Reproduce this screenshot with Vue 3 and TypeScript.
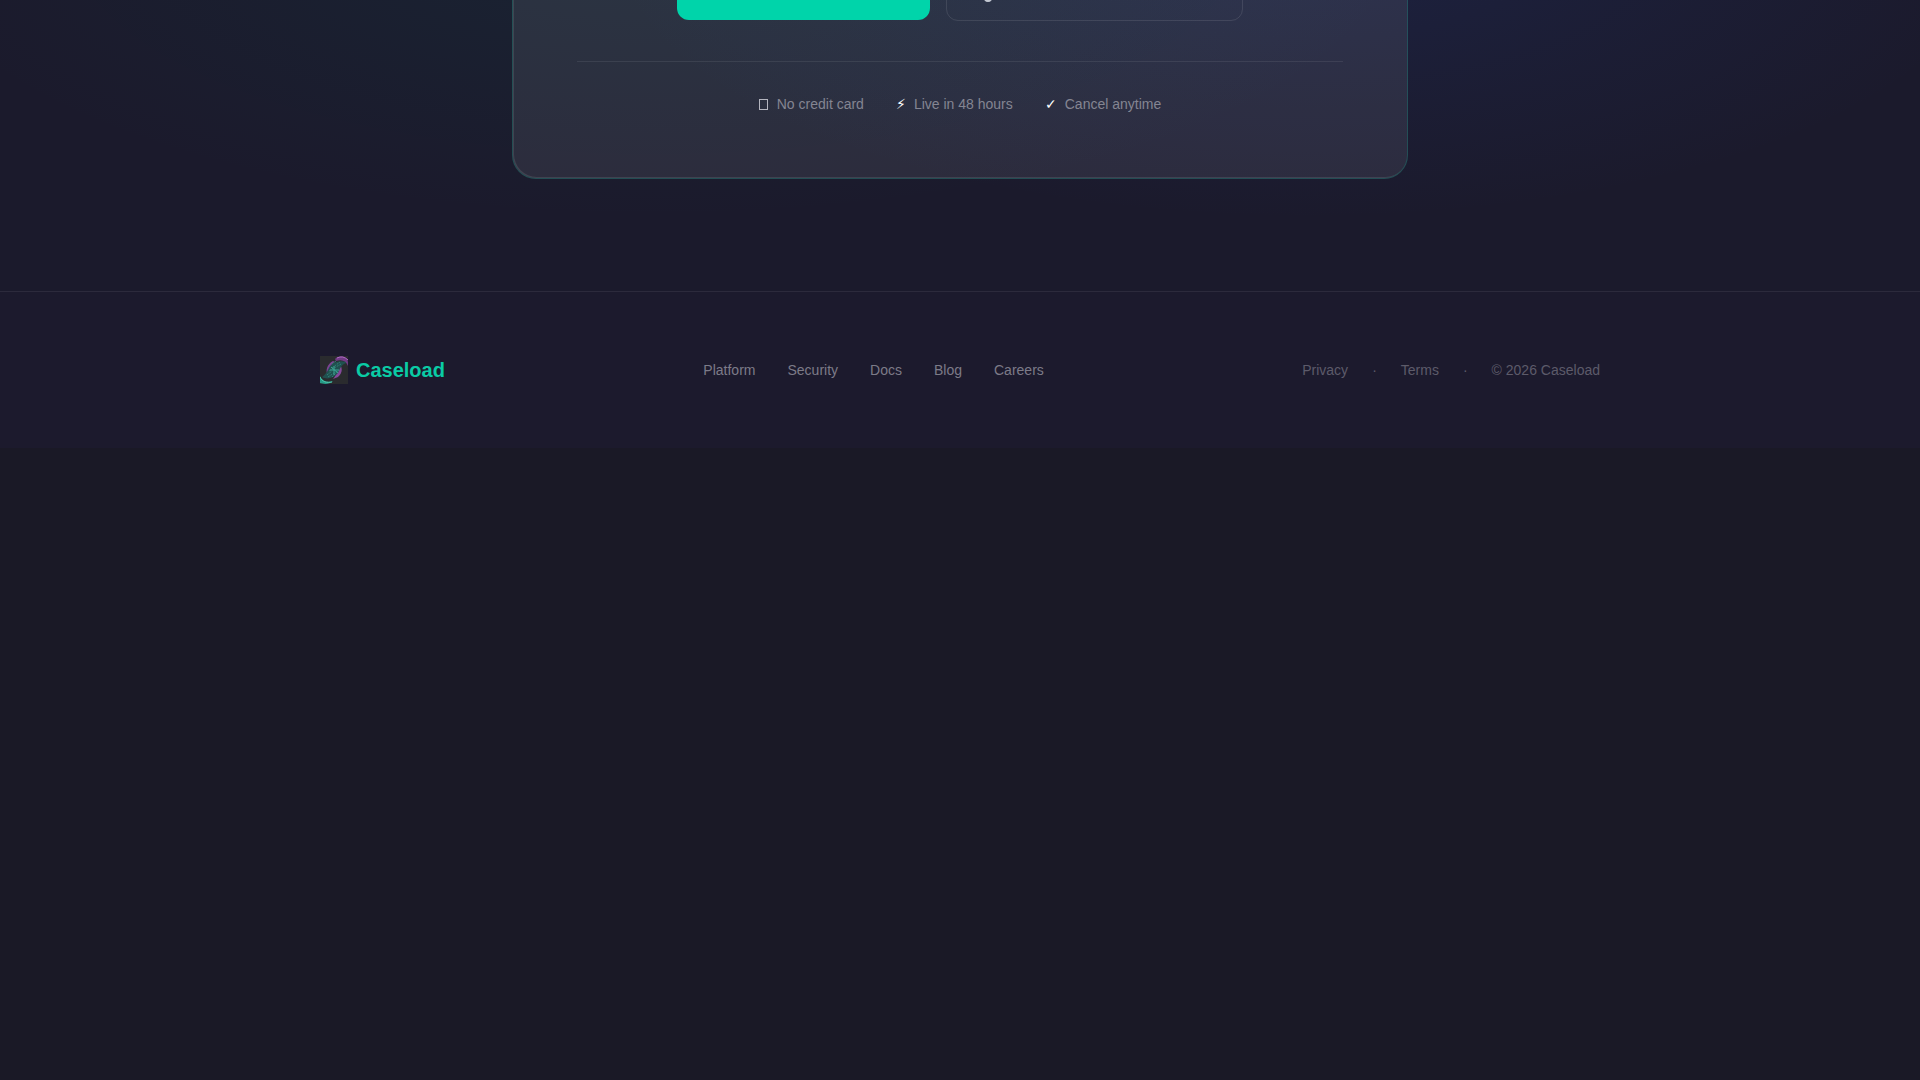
<script setup lang="ts">
interface Perk {
  mark: string
  label: string
}

// A perk without a mark gets the outlined box.
const perks: Perk[] = [
  { mark: '', label: 'No credit card' },
  { mark: '⚡\uFE0E', label: 'Live in 48 hours' },
  { mark: '✓', label: 'Cancel anytime' },
]

const links: string[] = ['Platform', 'Security', 'Docs', 'Blog', 'Careers']
</script>

<template>
  <div class="page">
    <section class="cta">
      <div class="card">
        <div class="actions">
          <button type="button" class="btn primary"></button>
          <button type="button" class="btn outline">
            <svg width="10" height="20" viewBox="0 0 10 20" aria-hidden="true">
              <ellipse cx="5" cy="14" rx="4" ry="5" fill="none" stroke="#c3c8d2" stroke-width="2" />
            </svg>
          </button>
        </div>
        <ul class="perks">
          <li v-for="perk in perks" :key="perk.label">
            <span v-if="perk.mark" class="mark">{{ perk.mark }}</span>
            <span v-else class="box"></span>
            <span class="label">{{ perk.label }}</span>
          </li>
        </ul>
      </div>
    </section>

    <footer class="footer">
      <div class="inner">
        <a href="#" class="brand">
          <svg width="28" height="28" viewBox="0 0 28 28" aria-hidden="true">
            <rect width="28" height="28" fill="#2a2b2e" />
            <path d="M15 3C19-1 27 0 28 6V10C26 5 22 3 16 5Z" fill="#713b85" />
            <path d="M17 2Q23-1 28 4" fill="none" stroke="#b06ac4" stroke-width="1" />
            <path d="M13 5C7 8 5 15 8 20L12 16C10 12 11 8 15 6Z" fill="#7b4492" />
            <path d="M18 7C23 10 23 17 18 21L13 23C17 18 18 13 16 10Z" fill="#85499b" />
            <path d="M26 6C20 4 15 6 11 9C8 12 8 17 2 21C7 24 14 22 18 17C20 13 21 9 26 7Z" fill="#20504f" />
            <path d="M12 8L16 5M12 12L20 6M9 15L21 8M7 19L12 15M8 21L17 15M12 21L19 14" fill="none" stroke="#2f7f76" stroke-width="1" stroke-dasharray="2 1" />
            <path d="M11 11L18 17M10 14H19M14 10V19" fill="none" stroke="#3da493" stroke-width="1" />
            <path d="M0 20C2 25 7 27 13 25C9 29 3 28 0 27Z" fill="#269b88" />
            <path d="M0 21C2 26 7 27 12 26" fill="none" stroke="#51c5ac" stroke-width="1" />
          </svg>
          <span>Caseload</span>
        </a>
        <nav class="links">
          <a v-for="link in links" :key="link" href="#">{{ link }}</a>
        </nav>
        <div class="legal">
          <a href="#">Privacy</a>
          <span>·</span>
          <a href="#">Terms</a>
          <span>·</span>
          <span>© 2026 Caseload</span>
        </div>
      </div>
    </footer>
  </div>
</template>

<style>
body {
  margin: 0;
  background: #1a1926;
}
</style>

<style scoped>
.page {
  min-height: 100vh;
  background: #1a1926;
  font-family: "Liberation Sans", Arial, sans-serif;
  font-size: 14px;
  line-height: 20px;
}

.cta {
  display: flex;
  justify-content: center;
  overflow: hidden;
  padding: 0 24px 112px;
  background:
    radial-gradient(ellipse 760px 280px at 34% -60px, rgba(0, 150, 130, 0.08), transparent),
    radial-gradient(ellipse 700px 280px at 68% -60px, rgba(40, 90, 210, 0.12), transparent),
    #1b1a2c;
}

.card {
  box-sizing: border-box;
  width: 100%;
  max-width: 896px;
  margin-top: -102px;
  padding: 64px;
  border: 1px solid rgba(0, 212, 170, 0.2);
  border-radius: 24px;
  background: rgba(255, 255, 255, 0.08);
  box-shadow: inset 1px -1px 0 rgba(255, 255, 255, 0.1);
}

.actions {
  display: flex;
  align-items: center;
  justify-content: center;
  gap: 16px;
  margin-bottom: 40px;
}

.btn {
  box-sizing: border-box;
  height: 56px;
  padding: 0 36px;
  border: 0;
  border-radius: 12px;
}

.primary {
  width: 253px;
  background: #00d4aa;
}

.outline {
  display: flex;
  align-items: center;
  width: 297px;
  height: 58px;
  border: 1px solid rgba(255, 255, 255, 0.1);
  background: transparent;
}

.perks {
  display: flex;
  justify-content: center;
  gap: 32px;
  margin: 0;
  padding: 32px 0 0;
  border-top: 1px solid rgba(255, 255, 255, 0.08);
  list-style: none;
}

.perks li {
  display: flex;
  align-items: center;
  gap: 8px;
}

.mark {
  color: #fff;
}

.box {
  box-sizing: border-box;
  width: 9px;
  height: 11px;
  margin-right: 1px;
  border: 1px solid #b4b5bf;
}

.label {
  color: #848592;
}

.footer {
  padding: 64px 24px;
  border-top: 1px solid #2c2a3c;
  background: #1c1a2d;
}

.inner {
  display: flex;
  align-items: center;
  justify-content: space-between;
  max-width: 1280px;
  margin: 0 auto;
}

.brand {
  display: flex;
  align-items: center;
  gap: 8px;
  color: #0acba5;
  font-size: 20px;
  font-weight: 700;
  line-height: 28px;
  text-decoration: none;
}

.links {
  display: flex;
  gap: 32px;
}

.links a {
  color: #7c7b88;
  text-decoration: none;
}

.legal {
  display: flex;
  gap: 24px;
  color: #5d5b6a;
}

.legal a {
  color: inherit;
  text-decoration: none;
}
</style>
